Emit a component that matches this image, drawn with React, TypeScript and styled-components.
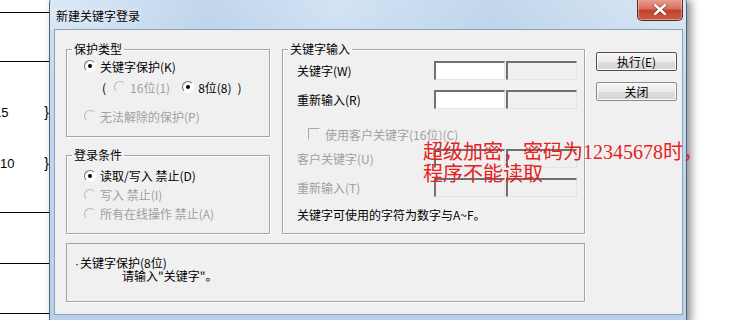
import React from "react";
import styled, { createGlobalStyle, css } from "styled-components";

const GlobalStyle = createGlobalStyle`
  html, body {
    margin: 0;
    padding: 0;
    background: #ffffff;
  }
  body {
    font-family: "Noto Sans CJK SC", "Liberation Sans", sans-serif;
    font-size: 12px;
    color: #000000;
  }
`;

const Page = styled.div`
  position: relative;
  display: flex;
  width: 745px;
  height: 320px;
  overflow: hidden;
  background: #ffffff;
`;

/* ---- sheet behind the dialog ---- */

const Sheet = styled.div`
  display: flex;
  flex-direction: column;
  width: 49px;
  flex-shrink: 0;
  padding-top: 12px;
  font-family: "Liberation Sans", sans-serif;
  font-size: 13px;
`;

const SheetRow = styled.div<{ $h: number; $line?: boolean; $top?: boolean }>`
  height: ${(p) => p.$h}px;
  box-sizing: border-box;
  display: flex;
  align-items: center;
  justify-content: space-between;
  ${(p) => p.$top && "border-top: 1px solid #000;"}
  ${(p) => p.$line && "border-bottom: 1px solid #000;"}
`;

const RowNum = styled.span<{ $shift?: number }>`
  margin-left: ${(p) => p.$shift ?? 0}px;
`;

const Brace = styled.span`
  margin-right: 0;
  font-size: 14px;
`;

/* ---- dialog window ---- */

const Window = styled.div`
  display: flex;
  flex-direction: column;
  width: 638px;
  height: 328px;
  margin-top: -4px;
  flex-shrink: 0;
  box-sizing: border-box;
  border: 1px solid #4f6479;
  border-radius: 7px 7px 0 0;
  background: linear-gradient(180deg, #d3e3f4 0%, #c2d8ef 30%, #b8d0ea 100%);
  box-shadow: 4px 2px 8px rgba(0, 0, 0, 0.45);
`;

const TitleBar = styled.div`
  display: flex;
  align-items: flex-start;
  justify-content: space-between;
  height: 32px;
  padding-left: 6px;
  padding-right: 3px;
  background: linear-gradient(
    90deg,
    rgba(255, 255, 255, 0.2) 0%,
    rgba(170, 195, 222, 0.4) 25%,
    rgba(210, 228, 245, 0.3) 45%,
    rgba(160, 188, 215, 0.3) 70%,
    rgba(255, 255, 255, 0.15) 100%
  );
`;

const Title = styled.span`
  margin-top: 10px;
  font-size: 12px;
  color: #000;
  text-shadow: 0 0 6px rgba(255, 255, 255, 0.9);
`;

const CloseButton = styled.div`
  display: flex;
  align-items: center;
  justify-content: center;
  width: 46px;
  height: 22px;
  margin-top: 2px;
  box-sizing: border-box;
  border: 1px solid #5a2a24;
  border-top: none;
  border-radius: 0 0 5px 5px;
  background: linear-gradient(180deg, #e7a394 0%, #d9705f 45%, #c2402c 55%, #cd5d44 100%);
  box-shadow: inset 0 0 0 1px rgba(255, 255, 255, 0.35);
`;

const Frame = styled.div`
  flex: 1;
  padding: 0 3px 0 4px;
  display: flex;
`;

const Client = styled.div`
  flex: 1;
  height: 286px;
  box-sizing: border-box;
  border: 1px solid #8aa3bd;
  background: #f0f0f0;
  padding: 12px 5px 0 11px;
  display: flex;
  flex-direction: column;
`;

const MainRow = styled.div`
  display: flex;
  align-items: flex-start;
`;

const LeftCol = styled.div`
  display: flex;
  flex-direction: column;
  gap: 11px;
  width: 204px;
`;

const Group = styled.fieldset<{ $w?: number; $ml?: number }>`
  margin: 0;
  margin-left: ${(p) => p.$ml ?? 0}px;
  min-width: 0;
  box-sizing: border-box;
  border: 1px solid #a5a5a5;
  box-shadow: 1px 1px 0 #ffffff, inset 1px 1px 0 #ffffff;
  padding: 0;
  ${(p) => p.$w && `width: ${p.$w}px;`}
`;

const Legend = styled.legend`
  margin-left: 5px;
  padding: 0 2px;
  font-size: 12px;
  line-height: 14px;
  height: 14px;
`;

const Rows = styled.div<{ $pt: number; $pb: number; $pl: number }>`
  display: flex;
  flex-direction: column;
  padding: ${(p) => `${p.$pt}px 0 ${p.$pb}px ${p.$pl}px`};
`;

const Row = styled.div<{ $h?: number; $mt?: number; $indent?: number; $disabled?: boolean }>`
  display: flex;
  align-items: center;
  height: ${(p) => p.$h ?? 20}px;
  margin-top: ${(p) => p.$mt ?? 0}px;
  margin-left: ${(p) => p.$indent ?? 0}px;
  white-space: nowrap;
  color: ${(p) => (p.$disabled ? "#a0a0a0" : "#000")};
`;

const RadioDot = styled.span<{ $checked?: boolean; $disabled?: boolean }>`
  position: relative;
  display: inline-block;
  width: 12px;
  height: 12px;
  box-sizing: border-box;
  border-radius: 50%;
  border: 1px solid;
  border-color: ${(p) =>
    p.$disabled ? "#b8b8b8 #f0f0f0 #f0f0f0 #b8b8b8" : "#6f6f6f #ffffff #ffffff #6f6f6f"};
  background: ${(p) => (p.$disabled ? "#f0f0f0" : "#ffffff")};
  margin-right: 4px;
  flex-shrink: 0;
  ${(p) =>
    p.$checked &&
    css`
      &::after {
        content: "";
        position: absolute;
        left: 3px;
        top: 3px;
        width: 4px;
        height: 4px;
        border-radius: 50%;
        background: #000;
      }
    `}
`;

const Check = styled.span`
  display: inline-block;
  width: 12px;
  height: 12px;
  box-sizing: border-box;
  border: 1px solid;
  border-color: #a8a8a8 #f4f4f4 #f4f4f4 #a8a8a8;
  background: #f0f0f0;
  margin-right: 5px;
`;

const Paren = styled.span<{ $ml?: number; $mr?: number }>`
  margin-left: ${(p) => p.$ml ?? 0}px;
  margin-right: ${(p) => p.$mr ?? 0}px;
`;

const Muted = styled.span<{ $mr?: number }>`
  color: #a0a0a0;
  margin-right: ${(p) => p.$mr ?? 0}px;
`;

const Label = styled.span`
  width: 137px;
  flex-shrink: 0;
`;

const Field = styled.span<{ $white?: boolean; $w?: number }>`
  display: inline-block;
  width: ${(p) => p.$w ?? 71}px;
  height: 19px;
  box-sizing: border-box;
  border-style: solid;
  border-width: 2px 1px 1px 2px;
  border-color: #707070 #e4e4e4 #e4e4e4 #707070;
  background: ${(p) => (p.$white ? "#ffffff" : "#f0f0f0")};
  margin-right: 1px;
`;

const ButtonCol = styled.div`
  display: flex;
  flex-direction: column;
  gap: 11px;
  margin-left: 11px;
  margin-top: 10px;
`;

const Button = styled.div<{ $default?: boolean }>`
  width: 81px;
  height: 19px;
  box-sizing: border-box;
  display: flex;
  align-items: center;
  justify-content: center;
  font-size: 12px;
  border: 1px solid ${(p) => (p.$default ? "#505050" : "#8a8a8a")};
  border-radius: 2px;
  background: linear-gradient(180deg, #f6f6f6 0%, #ececec 50%, #dedede 51%, #d6d6d6 100%);
  box-shadow: inset 0 0 0 1px #fbfbfb;
`;

const InfoPanel = styled.div`
  width: 519px;
  height: 59px;
  margin-top: 9px;
  box-sizing: border-box;
  border: 1px solid #a5a5a5;
  box-shadow: 1px 1px 0 #ffffff;
  padding: 12px 0 0 8px;
  font-size: 12px;
  line-height: 14px;
`;

const InfoLine = styled.div<{ $indent?: number }>`
  height: 13px;
  padding-left: ${(p) => p.$indent ?? 0}px;
  white-space: nowrap;
`;

const Bullet = styled.span`
  font-family: "Liberation Sans", sans-serif;
  margin-right: 1px;
`;

const Annotation = styled.div`
  position: absolute;
  left: 423px;
  top: 141px;
  font-family: "Liberation Serif", "Noto Sans CJK SC", serif;
  font-size: 20px;
  line-height: 22px;
  color: #e4231f;
  white-space: nowrap;
`;

function CloseGlyph() {
  return (
    <svg width="14" height="11" viewBox="0 0 14 11">
      <path
        d="M2 1 L12 10 M12 1 L2 10"
        stroke="#3a1410"
        strokeWidth="4"
        strokeLinecap="round"
        opacity="0.45"
      />
      <path d="M2 1 L12 10 M12 1 L2 10" stroke="#ffffff" strokeWidth="2.4" strokeLinecap="round" />
    </svg>
  );
}

export default function App() {
  return (
    <>
      <GlobalStyle />
      <Page>
        <Sheet>
          <SheetRow $h={50} $top $line />
          <SheetRow $h={38} />
          <SheetRow $h={24}>
            <RowNum $shift={-6}>15</RowNum>
            <Brace>{"}"}</Brace>
          </SheetRow>
          <SheetRow $h={27} />
          <SheetRow $h={24}>
            <RowNum>10</RowNum>
            <Brace>{"}"}</Brace>
          </SheetRow>
          <SheetRow $h={38} $line />
          <SheetRow $h={51} $line />
          <SheetRow $h={50} $line />
        </Sheet>

        <Window>
          <TitleBar>
            <Title>新建关键字登录</Title>
            <CloseButton>
              <CloseGlyph />
            </CloseButton>
          </TitleBar>
          <Frame>
            <Client>
              <MainRow>
                <LeftCol>
                  <Group>
                    <Legend>保护类型</Legend>
                    <Rows $pt={0} $pb={10} $pl={17}>
                      <Row>
                        <RadioDot $checked />
                        关键字保护(K)
                      </Row>
                      <Row $mt={1} $indent={18}>
                        <Paren $mr={8}>(</Paren>
                        <RadioDot $disabled />
                        <Muted $mr={12}>16位(1)</Muted>
                        <RadioDot $checked />
                        8位(8)
                        <Paren $ml={6}>)</Paren>
                      </Row>
                      <Row $mt={9} $disabled>
                        <RadioDot $disabled />
                        无法解除的保护(P)
                      </Row>
                    </Rows>
                  </Group>
                  <Group>
                    <Legend>登录条件</Legend>
                    <Rows $pt={4} $pb={10} $pl={17}>
                      <Row $h={19}>
                        <RadioDot $checked />
                        读取/写入 禁止(D)
                      </Row>
                      <Row $h={19} $disabled>
                        <RadioDot $disabled />
                        写入 禁止(I)
                      </Row>
                      <Row $h={19} $disabled>
                        <RadioDot $disabled />
                        所有在线操作 禁止(A)
                      </Row>
                    </Rows>
                  </Group>
                </LeftCol>

                <Group $w={303} $ml={12}>
                  <Legend>关键字输入</Legend>
                  <Rows $pt={4} $pb={9} $pl={14}>
                    <Row>
                      <Label>关键字(W)</Label>
                      <Field $white />
                      <Field />
                    </Row>
                    <Row $mt={9}>
                      <Label>重新输入(R)</Label>
                      <Field $white />
                      <Field />
                    </Row>
                    <Row $mt={15} $indent={11} $disabled>
                      <Check />
                      使用客户关键字(16位)(C)
                    </Row>
                    <Row $mt={4} $disabled>
                      <Label>客户关键字(U)</Label>
                      <Field />
                      <Field />
                    </Row>
                    <Row $mt={9} $disabled>
                      <Label>重新输入(T)</Label>
                      <Field />
                      <Field />
                    </Row>
                    <Row $mt={7}>关键字可使用的字符为数字与A~F。</Row>
                  </Rows>
                </Group>

                <ButtonCol>
                  <Button $default>执行(E)</Button>
                  <Button>关闭</Button>
                </ButtonCol>
              </MainRow>

              <InfoPanel>
                <InfoLine>
                  <Bullet>·</Bullet>关键字保护(8位)
                </InfoLine>
                <InfoLine $indent={47}>请输入"关键字"。</InfoLine>
              </InfoPanel>
            </Client>
          </Frame>
        </Window>

        <Annotation>
          超级加密，密码为12345678时，
          <br />
          程序不能读取
        </Annotation>
      </Page>
    </>
  );
}
